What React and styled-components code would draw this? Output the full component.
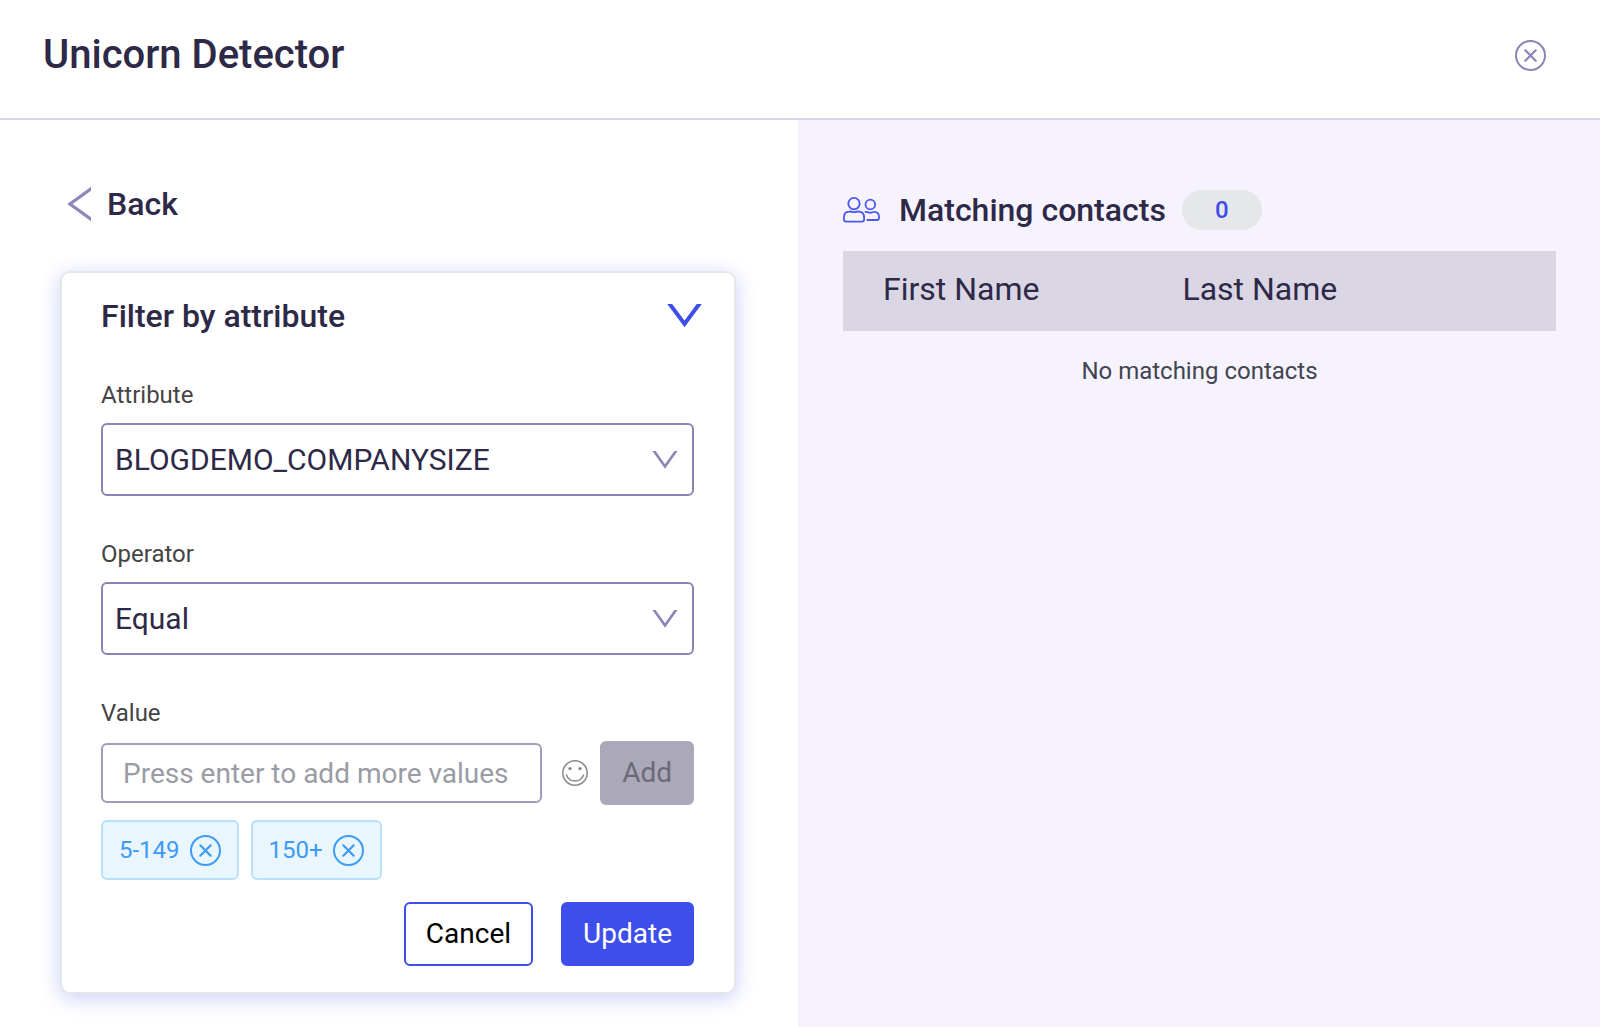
import React, { useState } from 'react';
import styled, { createGlobalStyle } from 'styled-components';

const GlobalStyle = createGlobalStyle`
    * {
        box-sizing: border-box;
    }

    body {
        margin: 0;
        background: #ffffff;
        color: #2e2947;
        font-family: Roboto, "Liberation Sans", sans-serif;
    }

    button, input, select {
        font-family: inherit;
    }
`

const Page = styled.div`
    min-height: 100vh;
    display: flex;
    flex-direction: column;
`

const Header = styled.header`
    display: flex;
    align-items: center;
    justify-content: space-between;
    padding: 31px 54px 39px 43px;
    border-bottom: 2px solid #d5d8eb;
`

const Title = styled.h1`
    margin: 0;
    font-size: 40px;
    line-height: 48px;
    font-weight: 500;
`

const IconButton = styled.button`
    display: flex;
    padding: 0;
    border: 0;
    background: none;
    color: ${props => props.$color};
    cursor: pointer;
`

const Content = styled.main`
    flex: 1;
    display: grid;
    grid-template-columns: 399fr 401fr;
`

const FilterPanel = styled.section`
    padding: 65px 62px 34px 60px;
`

const BackButton = styled.button`
    display: flex;
    align-items: center;
    gap: 16px;
    margin: 0 0 48px;
    padding: 0 0 0 7px;
    border: 0;
    background: none;
    color: #2e2947;
    font-size: 32px;
    line-height: 38px;
    font-weight: 500;
    cursor: pointer;
`

const Card = styled.form`
    padding: 24px 40px 26px 39px;
    border: 2px solid #e6e6ea;
    border-radius: 10px;
    background: #ffffff;
    box-shadow: 0 4px 20px rgba(62, 78, 235, 0.28);
`

const CardHeader = styled.div`
    display: flex;
    align-items: center;
    justify-content: space-between;
    margin-right: -8px;
    margin-bottom: 46px;
`

const Heading = styled.h2`
    margin: 0;
    font-size: 32px;
    line-height: 38px;
    font-weight: 500;
`

const Field = styled.div`
    display: flex;
    flex-direction: column;
    margin-bottom: ${props => props.$last ? '15px' : '44px'};
`

const Label = styled.label`
    margin-bottom: 14px;
    color: #444444;
    font-size: 24px;
    line-height: 28px;
`

const SelectBox = styled.div`
    display: grid;
    align-items: center;

    & > * {
        grid-area: 1 / 1;
    }

    svg {
        justify-self: end;
        margin-right: 16px;
        pointer-events: none;
    }
`

const Select = styled.select`
    appearance: none;
    width: 100%;
    height: 73px;
    padding: 0 48px 0 12px;
    border: 2px solid #8c84b4;
    border-radius: 6px;
    background: #ffffff;
    color: #2e2947;
    font-size: 30px;
`

const ValueRow = styled.div`
    display: flex;
    align-items: center;
`

const ValueInput = styled.input`
    flex: 1;
    min-width: 0;
    height: 60px;
    padding: 0 20px;
    border: 2px solid #a29db8;
    border-radius: 6px;
    color: #2e2947;
    font-size: 28px;

    &::placeholder {
        color: #9a9ca5;
        opacity: 1;
    }
`

const EmojiButton = styled(IconButton)`
    margin: 0 12px 0 20px;
`

const Button = styled.button`
    height: 64px;
    padding: 0 20px;
    border: 2px solid ${props => props.$border};
    border-radius: 6px;
    background: ${props => props.$background};
    color: ${props => props.$color};
    font-size: 28px;
    line-height: 32px;
`

const Chips = styled.ul`
    display: flex;
    gap: 12px;
    margin: 0 0 22px;
    padding: 0;
    list-style: none;
`

const Chip = styled.li`
    display: flex;
    align-items: center;
    gap: 10px;
    height: 60px;
    padding: 0 16px;
    border: 2px solid #b8e0fd;
    border-radius: 6px;
    background: #eaf6fe;
    color: #3d9bf5;
    font-size: 24px;
`

const Actions = styled.div`
    display: flex;
    justify-content: flex-end;
    gap: 28px;
`

const ContactsPanel = styled.section`
    padding: 70px 44px 40px 45px;
    background: #f6f3fe;
`

const ContactsHeader = styled.div`
    display: flex;
    align-items: center;
    margin-bottom: 21px;

    h2 {
        margin: 0 16px 0 19px;
    }
`

const Badge = styled.span`
    width: 80px;
    border-radius: 20px;
    background: #e6e7e8;
    color: #3e4eeb;
    font-size: 24px;
    line-height: 40px;
    font-weight: 500;
    text-align: center;
`

const Table = styled.table`
    width: 100%;
    table-layout: fixed;
    border-collapse: collapse;
`

const HeadCell = styled.th`
    width: ${props => props.$width};
    height: 80px;
    padding: 0 0 4px 40px;
    background: #dad6e4;
    font-size: 32px;
    line-height: 38px;
    font-weight: 400;
    text-align: left;
`

const EmptyCell = styled.td`
    padding: 26px 0;
    color: #40454f;
    font-size: 24px;
    line-height: 28px;
    text-align: center;
`

function ChevronDown({ width, height, color, stroke }) {
    return (
        <svg width={width} height={height} viewBox={`0 0 ${width} ${height}`} fill="none" aria-hidden="true">
            <path
                d={`M${stroke / 2} -1L${width / 2} ${height - stroke}L${width - stroke / 2} -1`}
                stroke={color}
                strokeWidth={stroke}
            />
        </svg>
    )
}

function ChevronLeft() {
    return (
        <svg width="24" height="34" viewBox="0 0 24 34" fill="none" aria-hidden="true">
            <path d="M25 1L3 17L25 33" stroke="#8f87b8" strokeWidth="3.2" />
        </svg>
    )
}

function CircleX() {
    return (
        <svg width="31" height="31" viewBox="0 0 31 31" fill="none" stroke="currentColor" strokeWidth="2" aria-hidden="true">
            <circle cx="15.5" cy="15.5" r="14.5" />
            <path d="M10.3 10.3L20.7 20.7M20.7 10.3L10.3 20.7" strokeWidth="2.2" strokeLinecap="round" />
        </svg>
    )
}

function Smile() {
    return (
        <svg width="26" height="26" viewBox="0 0 26 26" fill="none" aria-hidden="true">
            <circle cx="13" cy="13" r="12.2" stroke="currentColor" strokeWidth="1.5" />
            <circle cx="8" cy="8.6" r="1.7" fill="currentColor" />
            <circle cx="18" cy="8.6" r="1.7" fill="currentColor" />
            <path d="M4.4 15C6 19 9 21 13 21S20 19 21.6 15" stroke="currentColor" strokeWidth="1.5" strokeLinecap="round" />
        </svg>
    )
}

function People() {
    return (
        <svg width="37" height="26" viewBox="0 0 37 26" fill="none" stroke="#4a58ee" strokeWidth="1.8" aria-hidden="true">
            <circle cx="11" cy="6.6" r="5.7" />
            <circle cx="27.3" cy="7.5" r="4.8" />
            <path d="M6 14.6C8.5 14.2 9 15.2 11 15.2S13.5 14.2 16 14.6C19.5 14.8 21.1 17.4 21.1 20.5V22.6Q21.1 24.6 19.1 24.6H2.9Q.9 24.6 .9 22.6V20.5C.9 17.4 2.5 14.8 6 14.6Z" />
            <path d="M21.8 15C25 14.6 25.4 15.8 27.3 15.8S29.7 14.6 31.5 14.8C34.5 15 36 17.2 36 19.8V21Q36 23 34 23H23.6" />
        </svg>
    )
}

export default function App() {
    const [values, setValues] = useState(['5-149', '150+'])
    const [draft, setDraft] = useState('')

    const addValue = () => {
        if (!draft.trim()) return
        setValues([...values, draft.trim()])
        setDraft('')
    }

    const submit = event => {
        event.preventDefault()
        addValue()
    }

    return (
        <Page>
            <GlobalStyle />
            <Header>
                <Title>Unicorn Detector</Title>
                <IconButton type="button" $color="#8c84b4" aria-label="Close">
                    <CircleX />
                </IconButton>
            </Header>
            <Content>
                <FilterPanel>
                    <BackButton type="button">
                        <ChevronLeft />
                        Back
                    </BackButton>
                    <Card onSubmit={submit}>
                        <CardHeader>
                            <Heading>Filter by attribute</Heading>
                            <IconButton type="button" aria-label="Collapse filter">
                                <ChevronDown width={35} height={24} color="#3e4eeb" stroke={4} />
                            </IconButton>
                        </CardHeader>
                        <Field>
                            <Label htmlFor="attribute">Attribute</Label>
                            <SelectBox>
                                <Select id="attribute">
                                    <option>BLOGDEMO_COMPANYSIZE</option>
                                </Select>
                                <ChevronDown width={26} height={18} color="#8c84b4" stroke={2.6} />
                            </SelectBox>
                        </Field>
                        <Field>
                            <Label htmlFor="operator">Operator</Label>
                            <SelectBox>
                                <Select id="operator">
                                    <option>Equal</option>
                                </Select>
                                <ChevronDown width={26} height={18} color="#8c84b4" stroke={2.6} />
                            </SelectBox>
                        </Field>
                        <Field $last>
                            <Label htmlFor="value">Value</Label>
                            <ValueRow>
                                <ValueInput
                                    id="value"
                                    type="text"
                                    placeholder="Press enter to add more values"
                                    value={draft}
                                    onChange={event => setDraft(event.target.value)}
                                />
                                <EmojiButton type="button" $color="#8a8a8a" aria-label="Insert emoji">
                                    <Smile />
                                </EmojiButton>
                                <Button
                                    type="submit"
                                    disabled={!draft.trim()}
                                    $background="#aba8b9"
                                    $border="#aba8b9"
                                    $color="#6c6a78"
                                >
                                    Add
                                </Button>
                            </ValueRow>
                        </Field>
                        <Chips>
                            {values.map(value => (
                                <Chip key={value}>
                                    {value}
                                    <IconButton
                                        type="button"
                                        $color="#3d9bf5"
                                        aria-label={`Remove ${value}`}
                                        onClick={() => setValues(values.filter(item => item !== value))}
                                    >
                                        <CircleX />
                                    </IconButton>
                                </Chip>
                            ))}
                        </Chips>
                        <Actions>
                            <Button type="button" $background="#ffffff" $border="#3e4eeb" $color="#000000">Cancel</Button>
                            <Button type="button" $background="#3e4eeb" $border="#3e4eeb" $color="#ffffff">Update</Button>
                        </Actions>
                    </Card>
                </FilterPanel>
                <ContactsPanel>
                    <ContactsHeader>
                        <People />
                        <Heading>Matching contacts</Heading>
                        <Badge>0</Badge>
                    </ContactsHeader>
                    <Table>
                        <thead>
                            <tr>
                                <HeadCell $width="42%">First Name</HeadCell>
                                <HeadCell>Last Name</HeadCell>
                            </tr>
                        </thead>
                        <tbody>
                            <tr>
                                <EmptyCell colSpan={2}>No matching contacts</EmptyCell>
                            </tr>
                        </tbody>
                    </Table>
                </ContactsPanel>
            </Content>
        </Page>
    )
}
